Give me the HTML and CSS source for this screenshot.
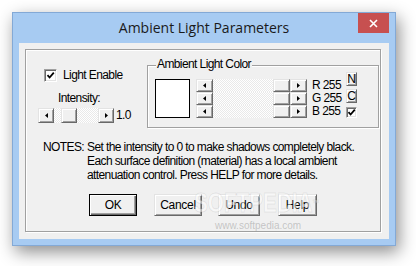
FILE: index.html
```html
<!DOCTYPE html>
<html>
<head>
<meta charset="utf-8">
<link rel="stylesheet" href="styles.css">
</head>
<body>
<div class="window">
  <div class="titlebar">
    <div class="title">Ambient Light Parameters</div>
    <div class="close"><svg width="9" height="9" viewBox="0 0 9 9"><path d="M1 1L8 8M8 1L1 8" stroke="#fff" stroke-width="1.6"/></svg></div>
  </div>
  <div class="client">
    <div class="frame">
      <div class="top">
        <div class="left">
          <div class="check-row">
            <span class="checkbox"><svg width="9" height="9" viewBox="0 0 9 9"><path d="M1.5 4.2L3.6 6.5L7.8 1.6" stroke="#000" stroke-width="1.8" fill="none"/></svg></span>
            <span>Light Enable</span>
          </div>
          <div class="int-label">Intensity:</div>
          <div class="slider-row">
            <div class="hscroll big">
              <span class="sbtn"><svg width="3" height="5" viewBox="0 0 3 5"><path d="M3 0V5L0 2.5Z"/></svg></span>
              <span class="track"><span class="thumb int-thumb"></span></span>
              <span class="sbtn"><svg width="3" height="5" viewBox="0 0 3 5"><path d="M0 0V5L3 2.5Z"/></svg></span>
            </div>
            <span class="val">1.0</span>
          </div>
        </div>
        <div class="group">
          <span class="legend">Ambient Light Color</span>
          <div class="swatch"></div>
          <div class="bars">
            <div class="hscroll small">
              <span class="sbtn"><svg width="3" height="5" viewBox="0 0 3 5"><path d="M3 0V5L0 2.5Z"/></svg></span>
              <span class="track end"><span class="thumb"></span></span>
              <span class="sbtn"><svg width="3" height="5" viewBox="0 0 3 5"><path d="M0 0V5L3 2.5Z"/></svg></span>
            </div>
            <div class="hscroll small">
              <span class="sbtn"><svg width="3" height="5" viewBox="0 0 3 5"><path d="M3 0V5L0 2.5Z"/></svg></span>
              <span class="track end"><span class="thumb"></span></span>
              <span class="sbtn"><svg width="3" height="5" viewBox="0 0 3 5"><path d="M0 0V5L3 2.5Z"/></svg></span>
            </div>
            <div class="hscroll small">
              <span class="sbtn"><svg width="3" height="5" viewBox="0 0 3 5"><path d="M3 0V5L0 2.5Z"/></svg></span>
              <span class="track end"><span class="thumb"></span></span>
              <span class="sbtn"><svg width="3" height="5" viewBox="0 0 3 5"><path d="M0 0V5L3 2.5Z"/></svg></span>
            </div>
          </div>
          <div class="labels">
            <div>R 255</div>
            <div>G 255</div>
            <div>B 255</div>
          </div>
          <div class="mini">
            <span class="minibtn">N</span>
            <span class="minibtn">C</span>
            <span class="checkbox small-check"><svg width="9" height="9" viewBox="0 0 9 9"><path d="M1.5 4.2L3.6 6.5L7.8 1.6" stroke="#000" stroke-width="1.8" fill="none"/></svg></span>
          </div>
        </div>
      </div>
      <div class="notes">
        <span>NOTES:</span>
        <span>Set the intensity to 0 to make shadows completely black.</span>
        <span></span>
        <span>Each surface definition (material) has a local ambient<br>attenuation control. Press HELP for more details.</span>
      </div>
      <div class="buttons">
        <span class="btn default w-ok">OK</span>
        <span class="btn w-cancel">Cancel</span>
        <span class="btn w-undo">Undo</span>
        <span class="btn w-help">Help</span>
      </div>
    </div>
  </div>
  <div class="wm-big">SOFTPEDIA<span class="tm">™</span></div>
  <div class="wm-url">www.softpedia.com</div>
</div>
</body>
</html>
```
FILE: styles.css
```css
* { box-sizing: border-box; }
body {
  margin: 0;
  background: #ffffff;
  width: 416px;
  height: 266px;
  overflow: hidden;
}
.window {
  position: relative;
  margin: 12px 0 0 12px;
  width: 384px;
  height: 234px;
  border: 1px solid #83a9d6;
  background: #a7cbf2;
  box-shadow: 3px 6px 16px rgba(0, 0, 0, 0.45);
  padding: 0 6px 6px 6px;
  display: flex;
  flex-direction: column;
}
.titlebar {
  height: 30px;
  display: grid;
  grid-template-columns: 1fr auto 1fr;
  align-items: start;
}
.title {
  grid-column: 2;
  margin-top: 5px;
  font: 14px/19px "Open Sans", sans-serif;
  color: #1a1a1a;
  white-space: nowrap;
}
.close {
  grid-column: 3;
  justify-self: end;
  width: 31px;
  height: 20px;
  background: #c75050;
  display: flex;
  align-items: center;
  justify-content: center;
}
.client {
  flex: 1;
  background: #f0f0f0;
  padding: 6px 8px 7px 6px;
}
.frame {
  height: 100%;
  border: 1px solid #a0a0a0;
  box-shadow: inset 1px 1px #fff, 1px 1px #fff;
  font: 12px/13px "Liberation Sans", Arial, sans-serif;
  letter-spacing: -0.6px;
  color: #000;
}
.top { display: flex; }
.left {
  width: 109px;
  margin-left: 12px;
}
.check-row {
  margin-top: 19px;
  margin-left: 6px;
  display: flex;
  align-items: center;
  gap: 6px;
  height: 13px;
}
.checkbox {
  width: 13px;
  height: 13px;
  background: #fff;
  border: 1px solid;
  border-color: #a0a0a0 #fff #fff #a0a0a0;
  box-shadow: inset 1px 1px #696969, inset -1px -1px #e3e3e3;
  display: flex;
  align-items: center;
  justify-content: center;
}
.int-label {
  margin-top: 10px;
  margin-left: 20px;
}
.slider-row {
  margin-top: 3px;
  display: flex;
  align-items: center;
  height: 15px;
}
.hscroll { display: flex; }
.hscroll.big { width: 76px; height: 15px; }
.hscroll.small { width: 111px; height: 13px; }
.sbtn, .thumb, .minibtn, .btn {
  background: #f0f0f0;
  border: 1px solid;
  border-color: #e3e3e3 #696969 #696969 #e3e3e3;
  box-shadow: inset 1px 1px #fff, inset -1px -1px #a0a0a0;
}
.sbtn {
  display: flex;
  align-items: center;
  justify-content: center;
  flex: none;
}
.big .sbtn { width: 16px; height: 15px; }
.small .sbtn { width: 17px; height: 13px; }
.track {
  flex: 1;
  display: flex;
  background: repeating-conic-gradient(#ffffff 0 25%, #e9e9e9 0 50%) 0 0 / 2px 2px;
}
.track.end { justify-content: flex-end; }
.thumb { display: block; flex: none; }
.small .thumb { width: 17px; height: 13px; }
.int-thumb { width: 16px; height: 15px; margin-left: 7px; }
.val { margin-left: 2px; }
.group {
  position: relative;
  margin-top: 15px;
  width: 232px;
  height: 63px;
  border: 1px solid #a0a0a0;
  box-shadow: inset 1px 1px #fff, 1px 1px #fff;
  display: flex;
  align-items: flex-start;
  padding: 6px 0 0 7px;
}
.legend {
  position: absolute;
  left: 8px;
  top: -8px;
  padding: 0 1px;
  background: #f0f0f0;
}
.swatch {
  margin-top: 7px;
  width: 35px;
  height: 39px;
  border: 1px solid #000;
  background: #fff;
}
.bars {
  margin-top: 7px;
  margin-left: 6px;
  display: flex;
  flex-direction: column;
}
.labels {
  margin-top: 7px;
  margin-left: 5px;
  width: 29px;
  white-space: nowrap;
}
.mini {
  margin-left: 5px;
  display: flex;
  flex-direction: column;
}
.minibtn {
  width: 11px;
  height: 14px;
  display: flex;
  align-items: center;
  justify-content: center;
  letter-spacing: 0;
  line-height: 12px;
  margin-bottom: 3px;
}
.minibtn + .minibtn + .checkbox { margin-top: 1px; }
.small-check { width: 11px; height: 11px; }
.notes {
  margin-top: 12px;
  padding-left: 17px;
  display: grid;
  grid-template-columns: 44px auto;
  line-height: 14px;
}
.buttons {
  margin-top: 12px;
  padding-left: 63px;
  display: flex;
}
.btn {
  height: 22px;
  display: flex;
  align-items: center;
  justify-content: center;
  letter-spacing: -0.3px;
}
.btn.default {
  border-color: #000;
  box-shadow: inset 1px 1px #fff, inset -1px -1px #696969, inset -2px -2px #a0a0a0;
}
.w-ok { width: 48px; }
.w-cancel { width: 48px; margin-left: 17px; }
.w-undo { width: 42px; margin-left: 16px; }
.w-help { width: 39px; margin-left: 18px; }
.wm-big {
  position: absolute;
  left: 181px;
  top: 176px;
  font: bold 28px/28px "Liberation Sans", Arial, sans-serif;
  color: rgba(255, 255, 255, 0.5);
  -webkit-text-stroke: 1px rgba(120, 120, 120, 0.15);
  transform: scaleX(0.74);
  transform-origin: left top;
  white-space: nowrap;
}
.wm-big .tm { font-size: 9px; vertical-align: top; }
.wm-url {
  position: absolute;
  left: 202px;
  top: 208px;
  font: 10px/10px "Liberation Sans", Arial, sans-serif;
  color: rgba(140, 140, 140, 0.45);
  white-space: nowrap;
}
```
